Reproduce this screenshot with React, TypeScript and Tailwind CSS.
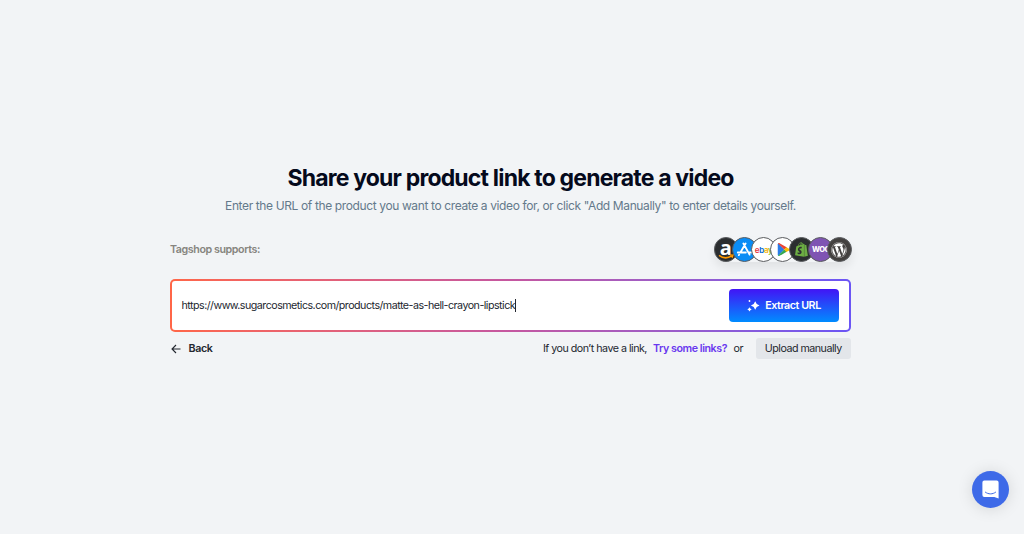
import { ReactNode, useState } from 'react';
import clsx from 'clsx';
import { FaShopify, FaWordpress } from 'react-icons/fa';

type Platform = {
  name: string;
  className: string;
  icon: ReactNode;
};

function AmazonMark() {
  return (
    <div className="relative flex h-[22px] w-[22px] shrink-0 justify-center">
      <span className="-mt-[1px] font-['Open_Sans',sans-serif] text-[20px] leading-[19px] font-bold text-white">a</span>
      <svg viewBox="0 0 22 22" className="absolute inset-0 size-[22px]" fill="none" stroke="#ff9900" strokeWidth="1.500">
        <path d="M4 16.400c4 3 9 2.900 12.800.5M14.800 16.100l3 .1-.7 2.500" />
      </svg>
    </div>
  );
}

function AppStoreMark() {
  return (
    <svg
      viewBox="0 0 24 24"
      className="h-[19px] w-[19px] shrink-0"
      fill="none"
      stroke="white"
      strokeWidth="2.300"
      strokeLinecap="round"
    >
      <path d="M13.400 4.500 6.800 15.800M10.600 4.500l7.800 14M3.500 15.800h10.200M17.200 15.800h3.300M5.200 18.600l-.3.500" />
    </svg>
  );
}

function PlayMark() {
  return (
    <svg viewBox="0 0 24 24" className="ml-[2px] h-[15px] w-[15px] shrink-0">
      <path d="M3.500 1.800C3 2.200 2.800 2.800 2.800 3.500v17c0 .7.2 1.300.7 1.700L13 12z" fill="#2b7de9" />
      <path d="M13 12 3.200 21.800c.6.900 1.700.9 2.500.4L17.600 15.200z" fill="#34a853" />
      <path d="M13 12 3.200 2.200c.6-.9 1.700-.9 2.500-.4L17.600 8.800z" fill="#ea4335" />
      <path d="m13 12 3.600 3.800 4.200-2.400c1.300-.8 1.300-2 0-2.800l-4.200-2.400z" fill="#fbbc04" />
    </svg>
  );
}

function EbayMark() {
  return (
    <span className="text-[8px] font-semibold tracking-[-0.3px]">
      <span className="text-[#e53238]">e</span>
      <span className="text-[#0064d2]">b</span>
      <span className="text-[#f5af02]">a</span>
      <span className="text-[#86b817]">y</span>
    </span>
  );
}

const platforms: Platform[] = [
  { name: 'Amazon', className: 'bg-[#2b2e30]', icon: <AmazonMark /> },
  { name: 'App Store', className: 'bg-[#0a8cf5]', icon: <AppStoreMark /> },
  { name: 'eBay', className: 'bg-white', icon: <EbayMark /> },
  { name: 'Google Play', className: 'bg-white', icon: <PlayMark /> },
  { name: 'Shopify', className: 'bg-[#2b2e30]', icon: <FaShopify size={15} color="#6dae43" /> },
  {
    name: 'WooCommerce',
    className: 'bg-[#7f54b3]',
    icon: <span className="ml-[1px] text-[7.5px] font-extrabold tracking-[-0.5px] text-white">WOO</span>,
  },
  { name: 'WordPress', className: 'bg-[#444140]', icon: <FaWordpress size={16} color="white" /> },
];

function PlatformStack() {
  return (
    <div className="-mr-[0.5px] flex rounded-full shadow-[0_6px_10px_rgba(0,0,0,0.07)]">
      {platforms.map((p, i) => (
        <div
          key={p.name}
          title={p.name}
          className={clsx(
            'flex size-[24.5px] items-center justify-center rounded-full border border-[#5a5c5f]',
            i > 0 && '-ml-[5.6px]',
            p.className
          )}
        >
          {p.icon}
        </div>
      ))}
    </div>
  );
}

function SparkleIcon() {
  return (
    <svg viewBox="0 0 13 13" className="h-[13px] w-[13px]" fill="white">
      <path d="M8.200 2.200 9.700 5 12.500 6.500 9.700 8 8.200 10.800 6.700 8 3.900 6.500 6.700 5z" />
      <path d="m2.500 8.200.8 1.400 1.400.8-1.400.8-.8 1.400-.8-1.400-1.400-.8 1.400-.8z" />
      <circle cx="2.500" cy="2" r=".9" />
    </svg>
  );
}

function ChatButton() {
  return (
    <button className="fixed right-[15px] bottom-[26.5px] flex size-[37px] items-center justify-center rounded-full bg-[#3e6ae8] shadow-[0_1px_16px_rgba(0,0,0,0.13)]">
      <svg viewBox="0 0 17 19" className="h-[19px] w-[17px]">
        <path
          d="M2.300.5h12.400a1.900 1.900 0 0 1 1.900 1.900v16.100l-4.300-1.500h-10A1.900 1.900 0 0 1 .4 15.100V2.400A1.900 1.900 0 0 1 2.300.5z"
          fill="white"
        />
        <path d="M3.400 12.200c3 2.300 7.200 2.300 10.200 0" fill="none" stroke="#3e6ae8" strokeWidth="1" strokeLinecap="round" />
      </svg>
    </button>
  );
}

export default function App() {
  const [url, setUrl] = useState('https://www.sugarcosmetics.com/products/matte-as-hell-crayon-lipstick');

  return (
    <div className="min-h-screen bg-[#f2f4f6] pt-[162px] pr-[3px] font-['Inter',sans-serif] text-[#23272f]">
      <main className="mx-auto w-[681px]">
        <h1 className="text-center text-[23px] leading-8 font-bold tracking-[-0.82px] whitespace-nowrap text-[#050a1c]">
          Share your product link to generate a video
        </h1>
        <p className="mt-[3px] text-center text-[12px] leading-[18px] tracking-[-0.375px] whitespace-nowrap text-[#64798b]">
          Enter the URL of the product you want to create a video for, or click "Add Manually" to enter details yourself.
        </p>

        <div className="mt-[22px] flex h-[25px] items-center justify-between">
          <span className="pt-[2px] text-[10.7px] font-semibold tracking-[-0.42px] text-[#86847e]">Tagshop supports:</span>
          <PlatformStack />
        </div>

        <div className="mt-[17px] h-[53px] rounded-[5px] bg-linear-to-r from-[#ff6647] via-[#c557a0] to-[#6b55f5] p-[2px]">
          <div className="flex h-full items-center rounded-[3px] bg-white pr-[10px] pl-[9.5px]">
            <div className="flex flex-1 items-center">
              <span
                contentEditable
                suppressContentEditableWarning
                className="pt-[2px] text-[10.7px] tracking-[-0.515px] whitespace-nowrap outline-none"
                onBlur={(e) => setUrl(e.currentTarget.textContent ?? '')}
              >
                {url}
              </span>
              <span className="h-[13px] w-px bg-[#23272f]" />
            </div>
            <button className="flex h-[33px] w-[110px] items-center justify-center gap-[5px] rounded-[4px] bg-linear-to-b/srgb from-[#4214f5] to-[#008cff] text-[10.7px] font-semibold tracking-[-0.44px] whitespace-nowrap text-white">
              <SparkleIcon />
              <span className="pt-[2px]">Extract URL</span>
            </button>
          </div>
        </div>

        <div className="mt-[6px] flex h-[21px] items-center justify-between text-[10.7px] whitespace-nowrap">
          <button className="flex items-center gap-[6.5px] pt-[2px] font-semibold tracking-[-0.36px]">
            <svg viewBox="0 0 12 12" className="-mt-px size-3" fill="none" stroke="currentColor" strokeWidth="1.100">
              <path d="M10.500 6h-8.500M6 2 2 6l4 4" />
            </svg>
            <span>Back</span>
          </button>
          <div className="flex items-center tracking-[-0.5px]">
            <span className="pt-[2px]">If you don’t have a link,</span>
            <button className="ml-[6px] pt-[2px] font-semibold tracking-[-0.44px] text-[#6938ef]">Try some links?</button>
            <span className="ml-[6.5px] pt-[2px]">or</span>
            <button className="ml-[12.5px] h-[21px] w-[95.5px] rounded-[3px] bg-[#e3e6ea] pt-[2px]">Upload manually</button>
          </div>
        </div>
      </main>
      <ChatButton />
    </div>
  );
}
